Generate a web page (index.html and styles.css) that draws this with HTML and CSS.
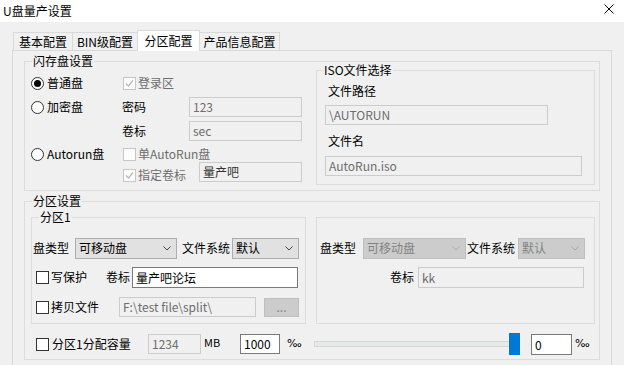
FILE: index.html
```html
<!DOCTYPE html>
<html>

<head>
    <title>U盘量产设置</title>
    <link rel="stylesheet" href="styles.css">
</head>

<body>
    <div class="titlebar">
        <span class="title">U盘量产设置</span>
        <svg class="close" width="10" height="10" viewBox="0 0 10 10">
            <path d="M0.5 0.5 L9.5 9.5 M9.5 0.5 L0.5 9.5" stroke="#000" stroke-width="1" fill="none" />
        </svg>
    </div>

    <div class="tabs">
        <div class="tab t1">基本配置</div>
        <div class="tab t2">BIN级配置</div>
        <div class="tab t3 active">分区配置</div>
        <div class="tab t4">产品信息配置</div>
    </div>

    <div class="panel">
        <!-- flash disk settings -->
        <div class="group flash">
            <span class="legend">闪存盘设置</span>
            <div class="flash-grid">
                <label class="radio"><span class="dot checked"></span>普通盘</label>
                <label class="check disabled span2"><span class="box"><svg width="11" height="11" viewBox="0 0 11 11"><path d="M2 5.5 L4.5 8 L9 2.5" stroke="#b8b8b8" stroke-width="1.2" fill="none" /></svg></span>登录区</label>

                <label class="radio"><span class="dot"></span>加密盘</label>
                <span class="lbl shift">密码</span>
                <div class="field w113">123</div>

                <span></span>
                <span class="lbl shift">卷标</span>
                <div class="field w113">sec</div>

                <label class="radio"><span class="dot"></span>Autorun盘</label>
                <label class="check disabled span2"><span class="box"></span>单AutoRun盘</label>

                <span></span>
                <div class="span2 vol-row">
                    <label class="check disabled"><span class="box"><svg width="11" height="11" viewBox="0 0 11 11"><path d="M2 5.5 L4.5 8 L9 2.5" stroke="#b8b8b8" stroke-width="1.2" fill="none" /></svg></span>指定卷标</label>
                    <div class="field w103 dark">量产吧</div>
                </div>
            </div>

            <div class="group iso">
                <span class="legend">ISO文件选择</span>
                <div class="iso-lbl">文件路径</div>
                <div class="field w223">\AUTORUN</div>
                <div class="iso-lbl second">文件名</div>
                <div class="field w257">AutoRun.iso</div>
            </div>
        </div>

        <!-- partition settings -->
        <div class="group part">
            <span class="legend">分区设置</span>
            <div class="sub-row">
                <div class="group sub left">
                    <span class="legend">分区1</span>
                    <div class="prow">
                        <span class="lbl">盘类型</span>
                        <div class="select w102 ml6"><span>可移动盘</span><svg width="8" height="5" viewBox="0 0 8 5"><path d="M0.5 0.5 L4 4 L7.5 0.5" stroke="#444" fill="none" /></svg></div>
                        <span class="lbl ml5">文件系统</span>
                        <div class="select w67 ml2"><span>默认</span><svg width="8" height="5" viewBox="0 0 8 5"><path d="M0.5 0.5 L4 4 L7.5 0.5" stroke="#444" fill="none" /></svg></div>
                    </div>
                    <div class="prow r2">
                        <label class="check w70 ml3"><span class="box"></span>写保护</label>
                        <span class="lbl">卷标</span>
                        <div class="field on w166 ml2 h21">量产吧论坛</div>
                    </div>
                    <div class="prow r3">
                        <label class="check w83 ml3"><span class="box"></span>拷贝文件</label>
                        <div class="field w137">F:\test file\split\</div>
                        <div class="btn-dis">...</div>
                    </div>
                </div>

                <div class="group sub right">
                    <div class="prow">
                        <span class="lbl">盘类型</span>
                        <div class="select dis w103 ml7"><span>可移动盘</span><svg width="8" height="5" viewBox="0 0 8 5"><path d="M0.5 0.5 L4 4 L7.5 0.5" stroke="#a8a8a8" fill="none" /></svg></div>
                        <span class="lbl ml1">文件系统</span>
                        <div class="select dis w67 ml3"><span>默认</span><svg width="8" height="5" viewBox="0 0 8 5"><path d="M0.5 0.5 L4 4 L7.5 0.5" stroke="#a8a8a8" fill="none" /></svg></div>
                    </div>
                    <div class="prow r2 end">
                        <span class="lbl mr4">卷标</span>
                        <div class="field w166 h21">kk</div>
                    </div>
                </div>
            </div>

            <div class="alloc">
                <label class="check w112 ml5"><span class="box"></span>分区1分配容量</label>
                <div class="field w53">1234</div>
                <span class="unit mb">MB</span>
                <div class="field on w40">1000</div>
                <span class="unit permil">‰</span>
                <div class="slider">
                    <div class="track"></div>
                    <div class="thumb"></div>
                </div>
                <div class="field on w41 h21 ml11">0</div>
                <span class="unit permil-end">‰</span>
            </div>
        </div>
    </div>
</body>

</html>
```

FILE: styles.css
```css
body {
    margin: 0;
    width: 624px;
    height: 365px;
    overflow: hidden;
    background-color: #f0f0f0;
    font-family: "Noto Sans CJK SC", "Noto Sans", sans-serif;
    font-size: 12px;
    line-height: 14px;
    color: #000;
}

.titlebar {
    height: 22px;
    background-color: #fff;
    display: flex;
    justify-content: space-between;
    align-items: flex-start;
}

.title {
    line-height: 21px;
    padding-left: 3px;
}

.close {
    margin-top: 4px;
    margin-right: 10px;
}

/* tabs */
.tabs {
    height: 28px;
    display: flex;
    align-items: flex-end;
    padding-left: 13px;
    box-sizing: border-box;
}

.tab {
    height: 18px;
    box-sizing: border-box;
    border: 1px solid #d9d9d9;
    border-bottom: none;
    margin-left: -1px;
    text-align: center;
    line-height: 17px;
    background-color: #f0f0f0;
}

.tab.t1 {
    margin-left: 0;
    width: 60px;
}

.tab.t2 {
    width: 66px;
}

.tab.t3 {
    width: 63px;
}

.tab.t4 {
    width: 81px;
}

.tab.active {
    height: 21px;
    margin-bottom: -1px;
    background-color: #fff;
    position: relative;
    z-index: 1;
    line-height: 19px;
}

.panel {
    margin-left: 12px;
    width: 600px;
    height: 320px;
    box-sizing: border-box;
    border: 1px solid #d9d9d9;
    border-bottom: none;
}

/* group boxes */
.group {
    position: relative;
    border: 1px solid #dcdcdc;
    box-sizing: border-box;
}

.legend {
    position: absolute;
    top: -8px;
    left: 7px;
    padding: 0 1px;
    background-color: #f0f0f0;
    line-height: 14px;
    white-space: nowrap;
}

.flash {
    margin: 10px 0 0 11px;
    width: 576px;
    height: 130px;
    display: flex;
    align-items: flex-start;
    padding: 9px 0 0 6px;
}

.flash-grid {
    display: grid;
    grid-template-columns: 92px 66px 113px;
    grid-template-rows: 24px 24px 24px 22px 20px;
    align-items: center;
    width: 271px;
}

.span2 {
    grid-column: span 2;
}

.vol-row {
    display: flex;
    align-items: center;
    justify-content: space-between;
}

.vol-row .field {
    margin-top: -6px;
}

.iso {
    margin: -1px 0 0 14px;
    width: 279px;
    height: 115px;
    padding: 13px 0 0 8px;
}

.iso .legend {
    left: 6px;
}

.iso-lbl {
    padding-left: 3px;
    margin-bottom: 7px;
}

.iso-lbl.second {
    margin-top: 9px;
    margin-bottom: 8px;
}

.part {
    margin: 10px 0 0 11px;
    width: 576px;
    height: 159px;
    padding: 15px 0 0 6px;
}

.sub-row {
    display: flex;
    gap: 10px;
}

.sub {
    height: 107px;
    padding-top: 19px;
}

.sub.left {
    width: 275px;
    padding-left: 1px;
}

.sub.right {
    width: 279px;
    padding-left: 3px;
    padding-right: 10px;
}

.prow {
    display: flex;
    align-items: center;
    height: 22px;
}

.prow.r2 {
    margin-top: 7px;
}

.prow.r3 {
    margin-top: 8px;
}

.prow.end {
    justify-content: flex-end;
}

.alloc {
    display: flex;
    align-items: center;
    height: 22px;
    margin-top: 9px;
}

/* controls */
.lbl {
    white-space: nowrap;
}

.lbl.shift {
    margin-left: -1px;
}

.radio,
.check {
    display: flex;
    align-items: center;
    white-space: nowrap;
}

.dot {
    width: 13px;
    height: 13px;
    box-sizing: border-box;
    border: 1px solid #333;
    border-radius: 50%;
    background-color: #fff;
    margin-right: 3px;
    display: flex;
    align-items: center;
    justify-content: center;
}

.dot.checked::after {
    content: "";
    width: 7px;
    height: 7px;
    border-radius: 50%;
    background-color: #000;
}

.box {
    width: 13px;
    height: 13px;
    box-sizing: border-box;
    border: 1px solid #333;
    background-color: #fff;
    margin-right: 2px;
    display: flex;
    align-items: center;
    justify-content: center;
    flex-shrink: 0;
}

.alloc .box {
    margin-right: 3px;
}

.check.disabled {
    color: #6d6d6d;
}

.check.disabled .box {
    border-color: #c6c6c6;
    background-color: #fcfcfc;
}

.field {
    height: 20px;
    box-sizing: border-box;
    border: 1px solid #cccccc;
    background-color: #f0f0f0;
    color: #6d6d6d;
    padding-left: 3px;
    line-height: 18px;
    white-space: nowrap;
    overflow: hidden;
    flex-shrink: 0;
}

.field.on {
    background-color: #fff;
    border-color: #7a7a7a;
    color: #000;
}

.field.dark {
    color: #333;
}

.h21 {
    height: 21px;
    line-height: 19px;
}

.select {
    height: 21px;
    box-sizing: border-box;
    border: 1px solid #adadad;
    background-color: #e1e1e1;
    display: flex;
    align-items: center;
    justify-content: space-between;
    padding: 0 5px 0 3px;
    flex-shrink: 0;
}

.select.dis {
    background-color: #cccccc;
    border-color: #bfbfbf;
    color: #838383;
}

.btn-dis {
    width: 35px;
    height: 19px;
    box-sizing: border-box;
    margin-left: 8px;
    border: 1px solid #bfbfbf;
    background-color: #cccccc;
    color: #838383;
    text-align: center;
    line-height: 15px;
}

.unit {
    white-space: nowrap;
}

.unit.mb {
    width: 36px;
    margin-left: 3px;
    margin-bottom: 4px;
    font-size: 11px;
}

.unit.permil,
.unit.permil-end {
    font-family: "DejaVu Sans", sans-serif;
    font-size: 11px;
    color: #000;
}

.unit.permil {
    width: 27px;
    margin-left: 7px;
}

.unit.permil-end {
    margin-left: 3px;
}

.slider {
    position: relative;
    width: 206px;
    height: 22px;
    flex-shrink: 0;
}

.track {
    position: absolute;
    left: 0;
    right: 0;
    top: 8px;
    height: 4px;
    border: 1px solid #d6d6d6;
    background-color: #e7eaea;
}

.thumb {
    position: absolute;
    right: 0;
    top: 0;
    width: 11px;
    height: 22px;
    background-color: #0078d7;
}

/* sizes and spacing */
.w40 { width: 40px; }
.w41 { width: 41px; }
.w53 { width: 53px; }
.w67 { width: 67px; }
.w70 { width: 70px; }
.w83 { width: 83px; }
.w102 { width: 102px; }
.w103 { width: 103px; }
.w112 { width: 112px; }
.w113 { width: 113px; }
.w137 { width: 137px; }
.w166 { width: 166px; }
.w223 { width: 223px; }
.w257 { width: 257px; }

.ml1 { margin-left: 1px; }
.ml2 { margin-left: 2px; }
.ml3 { margin-left: 3px; }
.ml5 { margin-left: 5px; }
.ml6 { margin-left: 6px; }
.ml7 { margin-left: 7px; }
.ml11 { margin-left: 11px; }
.mr4 { margin-right: 4px; }
```
